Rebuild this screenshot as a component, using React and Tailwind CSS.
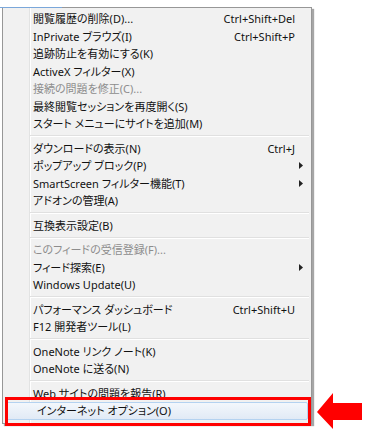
const items = [
  { label: "閲覧履歴の削除(D)...", key: "Ctrl+Shift+Del" },
  { label: "InPrivate ブラウズ(I)", key: "Ctrl+Shift+P" },
  { label: "追跡防止を有効にする(K)" },
  { label: "ActiveX フィルター(X)" },
  { label: "接続の問題を修正(C)...", disabled: true },
  { label: "最終閲覧セッションを再度開く(S)" },
  { label: "スタート メニューにサイトを追加(M)" },
  { sep: true },
  { label: "ダウンロードの表示(N)", key: "Ctrl+J" },
  { label: "ポップアップ ブロック(P)", sub: true },
  { label: "SmartScreen フィルター機能(T)", sub: true },
  { label: "アドオンの管理(A)" },
  { sep: true },
  { label: "互換表示設定(B)" },
  { sep: true },
  { label: "このフィードの受信登録(F)...", disabled: true },
  { label: "フィード探索(E)", sub: true },
  { label: "Windows Update(U)" },
  { sep: true },
  { label: "パフォーマンス ダッシュボード", key: "Ctrl+Shift+U" },
  { label: "F12 開発者ツール(L)" },
  { sep: true },
  { label: "OneNote リンク ノート(K)" },
  { label: "OneNote に送る(N)" },
  { sep: true },
  { label: "Web サイトの問題を報告(R)" },
  { label: "インターネット オプション(O)", active: true },
];

const MenuRow = ({ item }) => {
  if (item.sep) {
    return (
      <div className="h-[7px] flex flex-col justify-center ml-[27px] mr-[2px]">
        <div className="h-px bg-[#e0e0e0]" />
        <div className="h-px bg-white" />
      </div>
    );
  }

  const base = "h-[17.5px] flex items-center pl-[30px] leading-none";
  const active = item.active
    ? "mx-[3px] pl-[27px] rounded-[2px] border border-[#b4d2f0] bg-[linear-gradient(#f3f7fc,#e1eaf5)]"
    : "";

  return (
    <div className={`${base} ${active}`}>
      <span className={`flex-1 whitespace-nowrap ${item.disabled ? "text-[#8d8d8d]" : "text-[#111]"}`}>
        {item.label}
      </span>
      {item.key && <span className="text-[#111] whitespace-nowrap">{item.key}</span>}
      <span className="w-[16px] flex justify-end pr-[8px]">
        {item.sub && (
          <svg width="4" height="7" viewBox="0 0 4 7">
            <path d="M0 0 L4 3.5 L0 7 Z" fill="#222" />
          </svg>
        )}
      </span>
    </div>
  );
};

const App = () => {
  return (
    <div
      className="relative w-[370px] h-[432px] bg-white overflow-hidden text-[11px] [font-feature-settings:'palt']"
      style={{ fontFamily: '"Noto Sans", "Noto Sans CJK JP", sans-serif' }}
    >
      <div className="pt-[7px] pl-[2px]">
        <div className="relative w-[310px] border border-[#979797] pt-[2px] pb-[3px] shadow-[2px_2px_1px_rgba(0,0,0,0.35)] bg-[linear-gradient(to_right,#f1f1f1_26px,#e2e3e3_26px,#e2e3e3_27px,#ffffff_27px,#ffffff_28px,#f1f1f1_28px)]">
          <div className="absolute -top-px -left-[3px] w-[62px] h-px bg-[#7aa7da]" />
          {items.map((item, i) => (
            <MenuRow key={i} item={item} />
          ))}
        </div>
      </div>

      {/* red highlight box + arrow */}
      <div className="absolute left-[5px] top-[397px] w-[306px] h-[29px] border-[3px] border-[#ff0000]" />
      <svg className="absolute left-[316px] top-[392px]" width="48" height="38" viewBox="0 0 48 38">
        <polygon points="1,20 17,1 17,11 46,11 46,28 17,28 17,37" fill="#ff0000" />
      </svg>
    </div>
  );
};

export default App;
